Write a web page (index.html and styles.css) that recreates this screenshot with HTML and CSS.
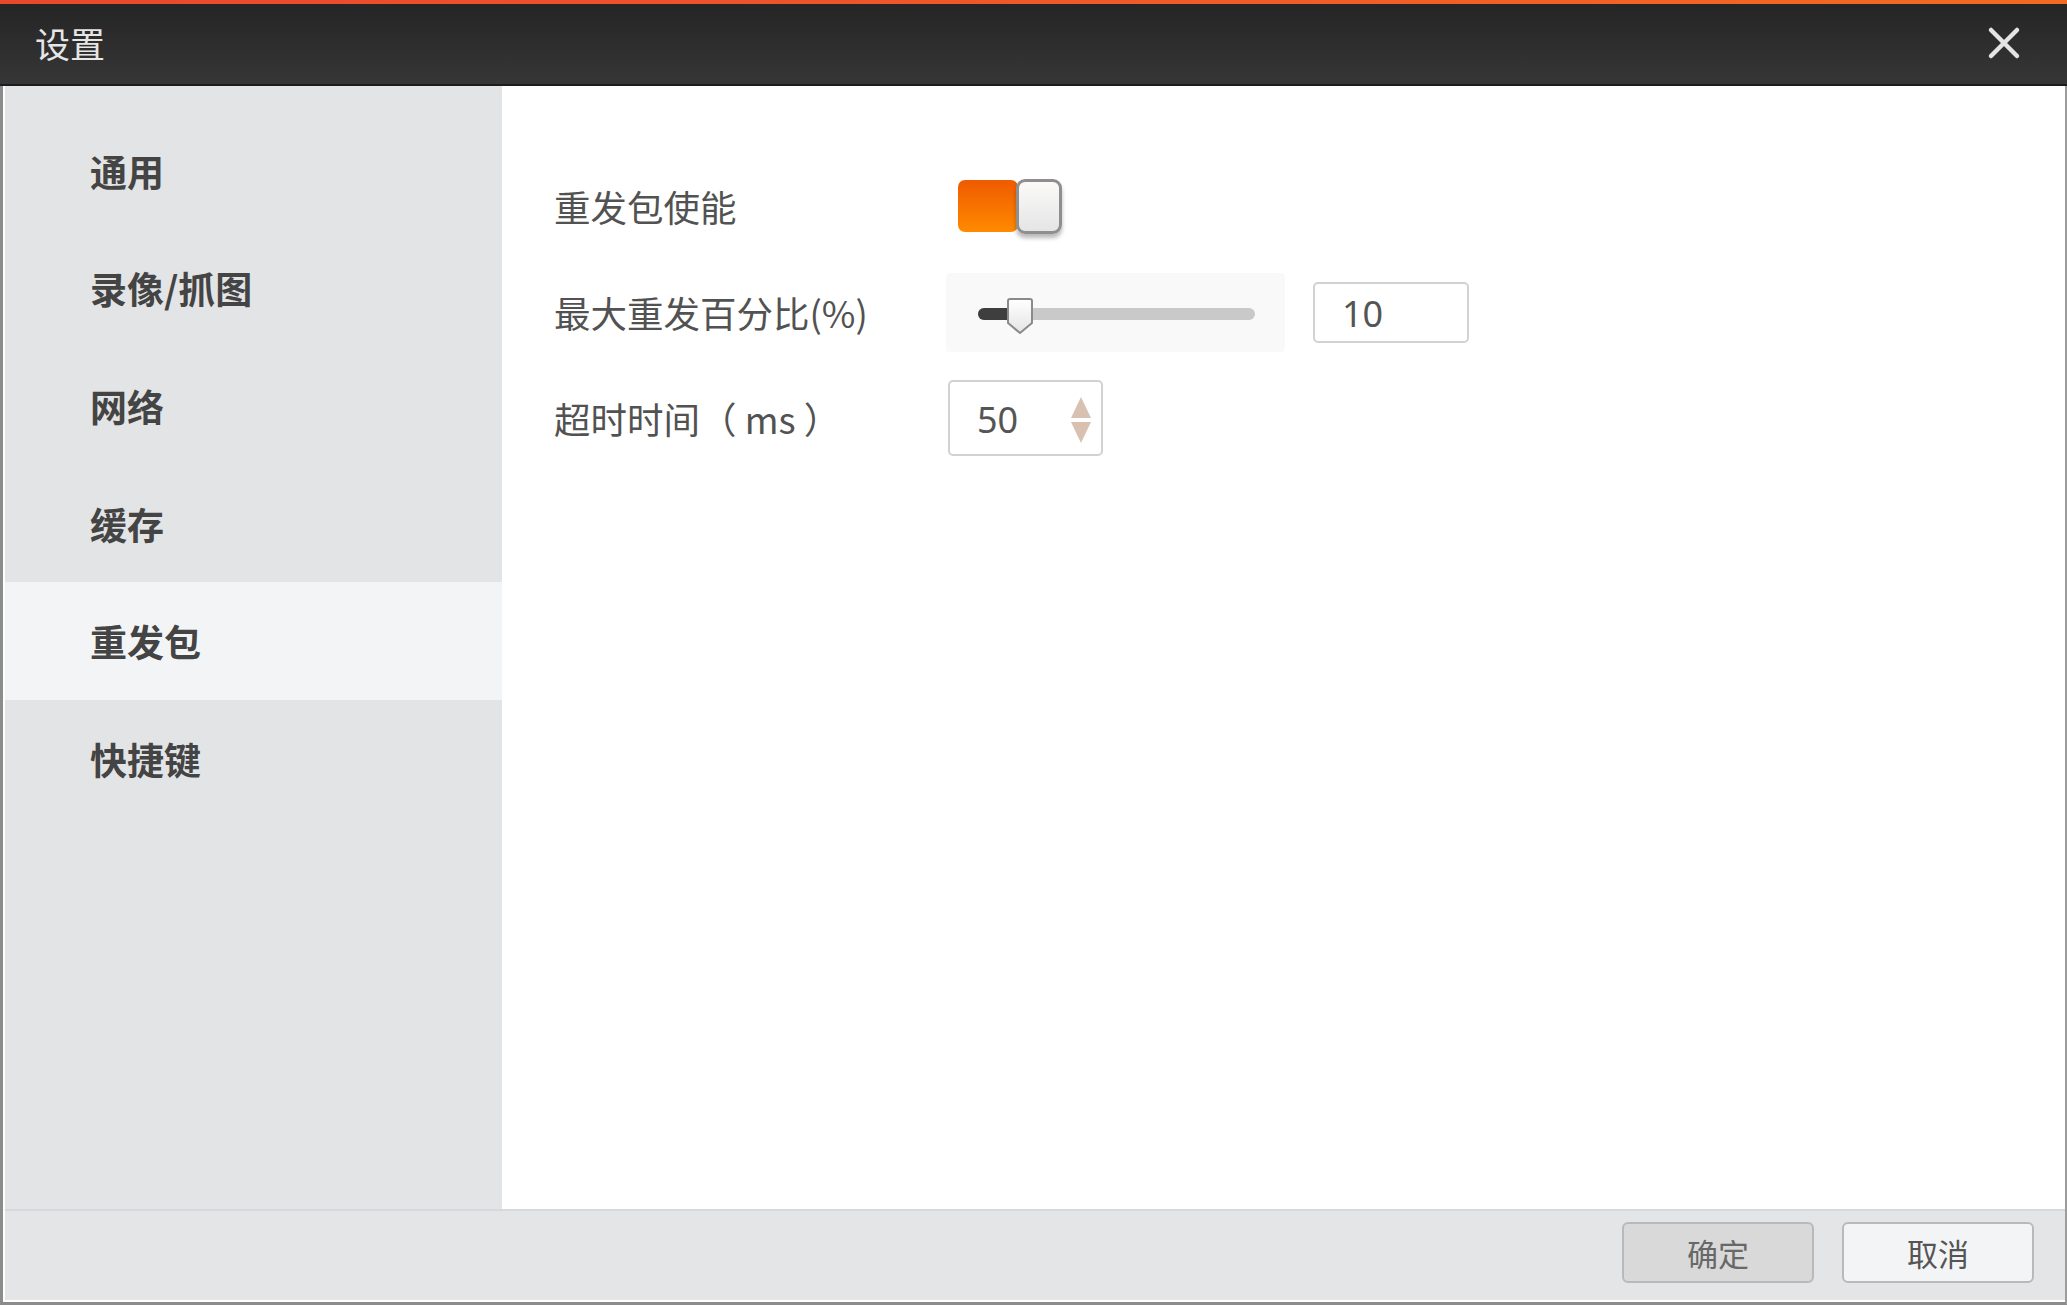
FILE: index.html
```html
<!DOCTYPE html>
<html lang="zh-CN">
<head>
<meta charset="utf-8">
<title>设置</title>
<link rel="stylesheet" href="styles.css">
</head>
<body>
<div class="window">
  <div class="topline"></div>
  <header class="titlebar">
    <span class="title">设置</span>
    <span class="close">
      <svg width="34" height="34" viewBox="0 0 34 34"><path d="M4 4 L30 30 M30 4 L4 30" stroke="#e4e4e4" stroke-width="4.5" stroke-linecap="round"/></svg>
    </span>
  </header>
  <div class="frame">
    <div class="main">
      <nav class="sidebar">
        <div class="nav-item">通用</div>
        <div class="nav-item">录像/抓图</div>
        <div class="nav-item">网络</div>
        <div class="nav-item">缓存</div>
        <div class="nav-item active">重发包</div>
        <div class="nav-item">快捷键</div>
      </nav>
      <section class="content">
        <div class="row">
          <div class="label">重发包使能</div>
          <div class="ctrl">
            <div class="toggle"><span class="toggle-on"></span><span class="knob"></span></div>
          </div>
        </div>
        <div class="row">
          <div class="label">最大重发百分比(%)</div>
          <div class="ctrl">
            <div class="slider">
              <div class="track">
                <div class="fill"></div>
                <svg class="thumb" width="28" height="38" viewBox="0 0 28 38">
                  <defs><linearGradient id="tg" x1="0" y1="0" x2="0" y2="1"><stop offset="0" stop-color="#ffffff"/><stop offset="1" stop-color="#e4e4e4"/></linearGradient></defs>
                  <path d="M2 4 Q2 2 4 2 H24 Q26 2 26 4 V26 L14 36 L2 26 Z" fill="url(#tg)" stroke="#8a8a8a" stroke-width="2" stroke-linejoin="round"/>
                </svg>
              </div>
            </div>
            <div class="field field-num">10</div>
          </div>
        </div>
        <div class="row">
          <div class="label">超时时间（ ms ）</div>
          <div class="ctrl">
            <div class="field spin">
              <span>50</span>
              <svg class="arrows" width="22" height="48" viewBox="0 0 22 48"><path d="M11 1 L21 22 H1 Z" fill="#d9c1b1"/><path d="M1 26 H21 L11 47 Z" fill="#d9c1b1"/></svg>
            </div>
          </div>
        </div>
      </section>
    </div>
    <footer class="footer">
      <button class="btn btn-ok">确定</button>
      <button class="btn btn-cancel">取消</button>
    </footer>
  </div>
</div>
</body>
</html>
```
FILE: styles.css
```css
* { box-sizing: border-box; }
html, body { margin: 0; padding: 0; }
body {
  width: 2067px;
  height: 1305px;
  overflow: hidden;
  font-family: "Noto Sans CJK SC", "Noto Sans", sans-serif;
  background: #ffffff;
}
.window {
  width: 2067px;
  height: 1305px;
  display: flex;
  flex-direction: column;
}
.topline {
  height: 4px;
  background: linear-gradient(90deg, #e8482c, #f0582a 50%, #f36a22);
}
.titlebar {
  height: 82px;
  border-bottom: 2px solid #1c1c1c;
  background: linear-gradient(180deg, #252525, #363636);
  display: flex;
  align-items: center;
  justify-content: space-between;
  padding: 0 46px 3px 35px;
}
.title {
  color: #e6e6e6;
  font-size: 35px;
  line-height: 1;
}
.close { display: flex; }
.frame {
  flex: 1;
  display: flex;
  flex-direction: column;
  border-left: 3px solid #8c8c8c;
  border-right: 2px solid #9c9c9c;
  border-bottom: 3px solid #8c8c8c;
  padding-left: 2px;
  padding-bottom: 2px;
  background: #ffffff;
}
.main {
  flex: 1;
  display: flex;
}
.sidebar {
  width: 497px;
  background: #e3e4e6;
  padding-top: 26px;
}
.nav-item {
  height: 117.6px;
  display: flex;
  align-items: center;
  padding-left: 85px;
  font-size: 37px;
  font-weight: 700;
  color: #444444;
}
.nav-item.active { background: #f3f4f6; }
.content {
  flex: 1;
  background: #ffffff;
  padding: 67px 0 0 52px;
}
.row {
  height: 106px;
  display: flex;
  align-items: center;
}
.label {
  width: 392px;
  font-size: 36.5px;
  color: #525252;
}
.ctrl {
  display: flex;
  align-items: center;
}
.toggle {
  display: flex;
  align-items: center;
  margin-left: 12px;
}
.toggle-on {
  width: 60px;
  height: 52px;
  border-radius: 7px;
  background: linear-gradient(180deg, #ef5a00, #ff8a00);
}
.knob {
  width: 46px;
  height: 55px;
  margin-left: -2px;
  border: 3px solid #8f8f8f;
  border-radius: 9px;
  background: linear-gradient(180deg, #fbfaf9, #e5e5e5);
  box-shadow: 0 4px 4px rgba(0, 0, 0, 0.28);
}
.slider {
  width: 339px;
  height: 79px;
  background: #f9f9f9;
  border-radius: 4px;
  display: flex;
  align-items: center;
  padding: 3px 0 0 32px;
}
.track {
  position: relative;
  width: 277px;
  height: 12px;
  border-radius: 6px;
  background: #c9c9c9;
}
.fill {
  width: 40px;
  height: 12px;
  border-radius: 6px 0 0 6px;
  background: #3e3e3e;
}
.thumb {
  position: absolute;
  left: 28px;
  top: -11px;
}
.field {
  background: #ffffff;
  border: 2px solid #d2d2d2;
  border-radius: 5px;
  font-family: "Noto Sans", "Open Sans", sans-serif;
  font-size: 36px;
  color: #555555;
  display: flex;
  align-items: center;
  padding: 3px 0 0 27px;
}
.field-num {
  width: 156px;
  height: 61px;
  margin-left: 28px;
}
.spin {
  width: 155px;
  height: 76px;
  margin-left: 2px;
  padding-right: 9px;
  justify-content: space-between;
}
.arrows { display: block; }
.footer {
  height: 91px;
  background: #e4e5e7;
  border-top: 2px solid #d6d9dc;
  display: flex;
  justify-content: flex-end;
  align-items: flex-start;
  gap: 28px;
  padding: 11px 31px 0 0;
}
.btn {
  width: 192px;
  height: 61px;
  border: 2px solid #b9b9b9;
  border-radius: 6px;
  font-family: "Noto Sans CJK SC", sans-serif;
  font-size: 31px;
  padding: 0;
  line-height: 1;
}
.btn-ok { background: #d9d9d9; color: #686868; }
.btn-cancel { background: #f3f4f6; color: #555555; }
```
